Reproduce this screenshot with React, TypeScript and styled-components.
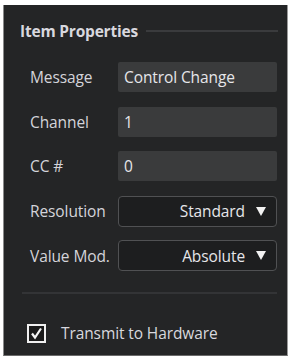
import React from "react";
import styled, { createGlobalStyle } from "styled-components";

const Global = createGlobalStyle`
  html, body { margin: 0; padding: 0; background: #ffffff; }
  body { font-family: "Open Sans", "Noto Sans", sans-serif; }
`;

const Panel = styled.div`
  box-sizing: border-box;
  margin: 5px 0 0 3px;
  width: 285px;
  height: 351px;
  background: #242526;
  border-left: 1px solid #8a8a8a;
  border-right: 1px solid #9a9a9a;
  border-bottom: 1px solid #6a6a6a;
  display: flex;
  flex-direction: column;
`;

const Header = styled.div`
  display: flex;
  align-items: center;
  gap: 8px;
  padding: 16px 9px 0 16px;
  height: 20px;
`;

const Title = styled.div`
  font-weight: 700;
  font-size: 15.5px;
  color: #d8d8de;
  white-space: nowrap;
  letter-spacing: -0.2px;
`;

const Rule = styled.div`
  flex: 1;
  height: 2px;
  background: #3a3b3d;
`;

const Rows = styled.div`
  display: flex;
  flex-direction: column;
  gap: 14.5px;
  padding: 21px 10px 0 26px;
`;

const Row = styled.div`
  display: grid;
  grid-template-columns: 88px 1fr;
  align-items: center;
  height: 30px;
`;

const Label = styled.div`
  font-size: 15.5px;
  color: #d4d4da;
  white-space: nowrap;
  letter-spacing: -0.1px;
`;

const Field = styled.div`
  box-sizing: border-box;
  height: 30px;
  background: #3a3b3c;
  border-radius: 2px;
  display: flex;
  align-items: center;
  padding-left: 6px;
  font-size: 15.5px;
  color: #e6e6ea;
  letter-spacing: -0.1px;
`;

const Dropdown = styled.div`
  box-sizing: border-box;
  height: 31px;
  background: #1d1e1f;
  border: 1px solid #505153;
  border-radius: 4px;
  display: flex;
  align-items: center;
  justify-content: flex-end;
  gap: 11px;
  padding-right: 10px;
  font-size: 15.5px;
  color: #e6e6ea;
  letter-spacing: -0.1px;
`;

const Arrow = styled.svg`
  width: 10px;
  height: 9px;
  fill: #f2f2f2;
`;

const Divider = styled.div`
  margin: 22px 10px 0 18px;
  height: 2px;
  background: #333436;
`;

const CheckRow = styled.label`
  display: flex;
  align-items: center;
  gap: 15px;
  padding: 28px 0 0 23px;
  font-size: 15.5px;
  color: #d8d8de;
  letter-spacing: -0.1px;
`;

const Box = styled.span`
  box-sizing: border-box;
  width: 19px;
  height: 19px;
  border: 2px solid #f0f0f0;
  background: #1a1a1a;
  display: flex;
  align-items: center;
  justify-content: center;
`;

const items: { label: string; value: string; kind: "field" | "drop" }[] = [
  { label: "Message", value: "Control Change", kind: "field" },
  { label: "Channel", value: "1", kind: "field" },
  { label: "CC #", value: "0", kind: "field" },
  { label: "Resolution", value: "Standard", kind: "drop" },
  { label: "Value Mod.", value: "Absolute", kind: "drop" },
];

export default function App() {
  return (
    <>
      <Global />
      <Panel>
        <Header>
          <Title>Item Properties</Title>
          <Rule />
        </Header>
        <Rows>
          {items.map((it) => (
            <Row key={it.label}>
              <Label>{it.label}</Label>
              {it.kind === "field" ? (
                <Field>{it.value}</Field>
              ) : (
                <Dropdown>
                  <span>{it.value}</span>
                  <Arrow viewBox="0 0 10 9">
                    <path d="M0 0 H10 L5 9 Z" />
                  </Arrow>
                </Dropdown>
              )}
            </Row>
          ))}
        </Rows>
        <Divider />
        <CheckRow>
          <Box>
            <svg width="13" height="13" viewBox="0 0 13 13">
              <path d="M2 6.5 L5 10.5 L11 1.5" stroke="#f4f4f4" strokeWidth="2.2" fill="none" />
            </svg>
          </Box>
          <span>Transmit to Hardware</span>
        </CheckRow>
      </Panel>
    </>
  );
}
